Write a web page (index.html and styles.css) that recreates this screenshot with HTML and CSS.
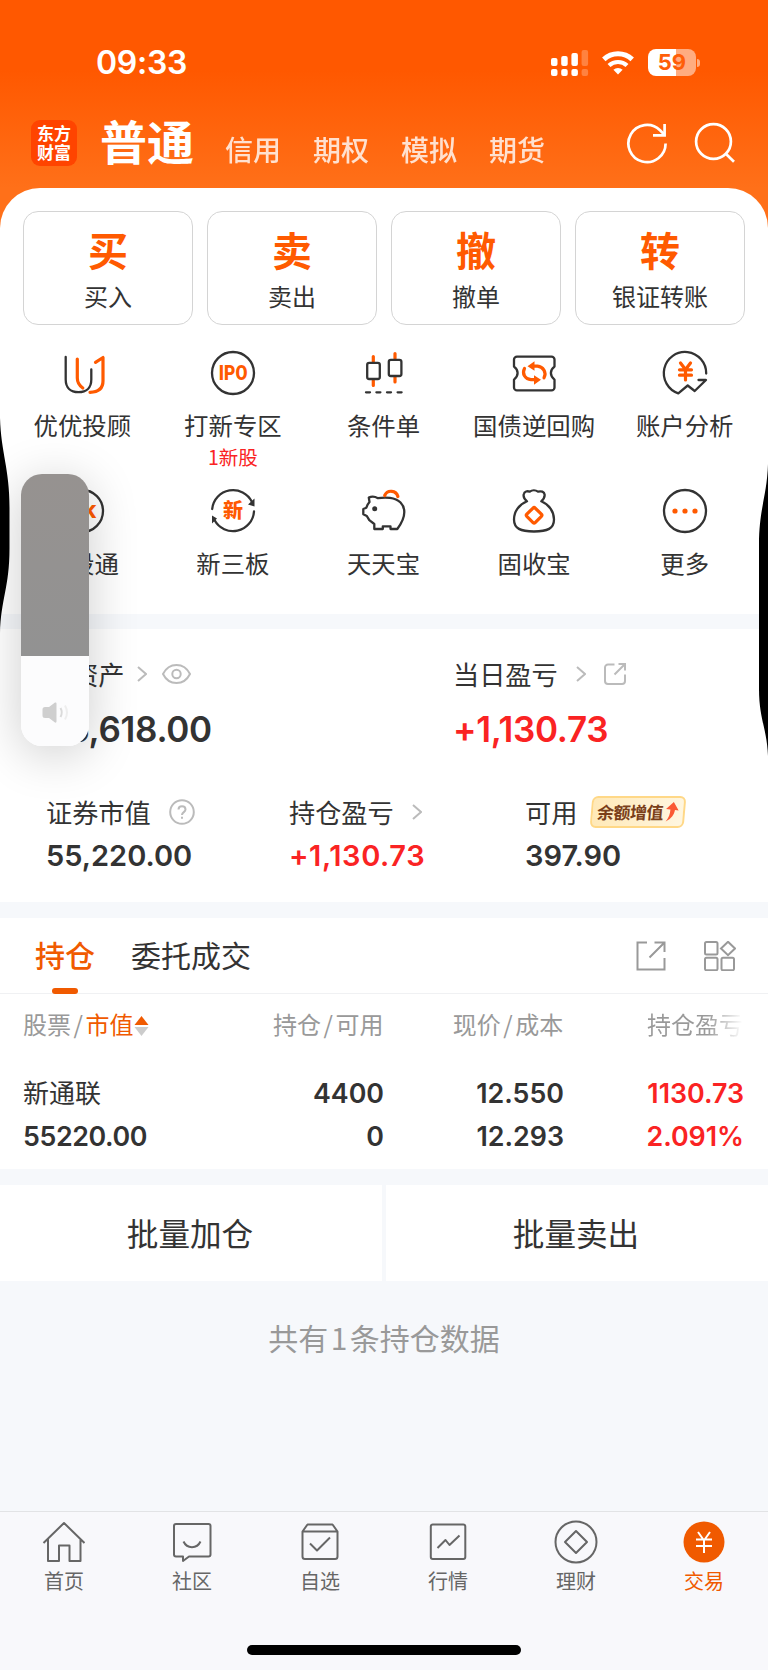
FILE: index.html
```html
<!DOCTYPE html>
<html lang="zh-CN">
<head>
    <meta charset="utf-8">
    <title>交易</title>
    <link rel="stylesheet" href="styles.css">
</head>
<body>
<div class="app">
    <div class="status-bar">
        <div class="clock">09:33</div>
        <div class="status-icons">
            <svg class="signal" width="38" height="26" viewBox="0 0 38 26" fill="#fff">
                <rect x="0" y="8" width="6.5" height="8" rx="2"/>
                <rect x="10.2" y="6" width="6.5" height="10" rx="2"/>
                <rect x="20.4" y="3" width="6.5" height="13" rx="2"/>
                <rect x="30.6" y="0" width="6.5" height="16" rx="2" opacity=".25"/>
                <rect x="0" y="19" width="6.5" height="7" rx="2"/>
                <rect x="10.2" y="19" width="6.5" height="7" rx="2"/>
                <rect x="20.4" y="19" width="6.5" height="7" rx="2"/>
                <rect x="30.6" y="19" width="6.5" height="7" rx="2" opacity=".25"/>
            </svg>
            <svg class="wifi" width="32" height="25" viewBox="0 0 32 25" fill="none" stroke="#fff" stroke-width="5">
                <path d="M1.8 9.4a20.6 20.6 0 0 1 28.4 0"/>
                <path d="M7 15.6a13 13 0 0 1 18 0" stroke-width="4.2"/>
                <path d="M16 24.5l-4.6-4.7a6.6 6.6 0 0 1 9.2 0z" fill="#fff" stroke="none"/>
            </svg>
            <div class="battery"><span>59</span></div>
            <div class="battery-tip"></div>
        </div>
    </div>

    <div class="top-nav">
        <div class="logo"><span>东方</span><span>财富</span></div>
        <div class="nav-active">普通</div>
        <div class="nav-links">
            <span>信用</span>
            <span>期权</span>
            <span>模拟</span>
            <span>期货</span>
        </div>
        <div class="nav-icons">
            <svg width="42" height="42" viewBox="0 0 42 42" fill="none" stroke="#fff" stroke-width="2.7">
                <path d="M39.6 21.500A18.6 18.6 0 1 1 34 8.2l4 4"/>
                <path d="M38.6 2v11.4H27"/>
            </svg>
            <svg width="42" height="42" viewBox="0 0 42 42" fill="none" stroke="#fff" stroke-width="2.7">
                <circle cx="19.5" cy="19.5" r="17.4"/>
                <path d="M31.8 31.8l8.2 8"/>
            </svg>
        </div>
    </div>

    <div class="sheet">
        <div class="cards">
            <div class="card"><b>买</b><span>买入</span></div>
            <div class="card"><b>卖</b><span>卖出</span></div>
            <div class="card"><b>撤</b><span>撤单</span></div>
            <div class="card"><b>转</b><span>银证转账</span></div>
        </div>

        <div class="services">
            <div class="service">
                <svg class="line-icon" viewBox="0 0 44 44">
                    <path class="dark" d="M5.7 6v22.5c0 8.2 4.8 12.7 12.8 12.7s12.8-4.5 12.8-12.7v-10"/>
                    <path class="hot" d="M17.3 8v19c0 5 2 7.5 5.5 10M35.5 11.300L43 6.5V30c0 7.5-5 11-13 11.3"/>
                </svg>
                <span>优优投顾</span>
            </div>
            <div class="service">
                <svg class="line-icon" viewBox="0 0 44 44">
                    <circle class="dark" cx="22" cy="22" r="21"/>
                    <text x="7.8" y="29.2" textLength="28.6" lengthAdjust="spacingAndGlyphs" font-size="20.5">IPO</text>
                </svg>
                <span>打新专区</span>
                <em>1新股</em>
            </div>
            <div class="service">
                <svg class="line-icon" viewBox="0 0 44 44">
                    <path class="hot" d="M12.3 5.5v5M12.3 29.500v5M34 2.500v5M34 26v5"/>
                    <rect class="dark" x="6.2" y="11.8" width="12.600" height="16.2" rx="2"/>
                    <rect class="dark" x="27.800" y="8.8" width="12.600" height="16.2" rx="2"/>
                    <path class="dark" d="M5 41.300h4M15.400 41.300h4M26 41.300h4M36.600 41.300h4"/>
                </svg>
                <span>条件单</span>
            </div>
            <div class="service">
                <svg class="line-icon" viewBox="0 0 44 44">
                    <path class="dark" d="M5 5.6h34.500a3 3 0 0 1 3 3v7c-4.800 3.500-4.800 9.500 0 13v7.800a3 3 0 0 1-3 3H5a3 3 0 0 1-3-3v-7.800c4.800-3.500 4.800-9.500 0-13v-7a3 3 0 0 1 3-3z"/>
                    <path class="hot" d="M12.500 17.500c-3 5.500 1 10.800 6.500 11.200h5M32 26.800c3-5.500-1-11-6.500-11.600h-5"/>
                    <path d="M15.500 15.200l7-5v9.500zM29 28.700l-7 5v-9.500z" fill="#ff5a00"/>
                </svg>
                <span>国债逆回购</span>
            </div>
            <div class="service">
                <svg class="line-icon" viewBox="0 0 44 44">
                    <path class="dark" d="M43.200 22.600A21.200 21.200 0 1 0 15.300 42.300l9.400-7.800 7 5.500L43 29h-7.500"/>
                    <path class="hot" d="M17.500 12l5 6.500 5-6.500M16.500 18.800h12M16.500 24.200h12M22.500 19v10"/>
                </svg>
                <span>账户分析</span>
            </div>
            <div class="service">
                <svg class="line-icon" viewBox="0 0 44 44">
                    <circle class="dark" cx="22" cy="22" r="21"/>
                    <text x="9" y="29" textLength="27" lengthAdjust="spacingAndGlyphs" font-size="19">HK</text>
                </svg>
                <span>港股通</span>
            </div>
            <div class="service">
                <svg class="line-icon" viewBox="0 0 44 44">
                    <path class="dark" d="M1.200 20A21 21 0 0 1 41 13M43 22.500A21 21 0 0 1 3.500 31"/>
                    <path d="M43.500 9.500v8l-6.500-2zM1 34.500V26.500l5 3z" fill="#333"/>
                    <text class="cjk" x="22" y="29" text-anchor="middle" font-size="20">新</text>
                </svg>
                <span>新三板</span>
            </div>
            <div class="service">
                <svg class="line-icon" viewBox="0 0 44 44">
                    <path class="dark" d="M8.500 13L7.800 8.600c3-1.500 6-1.200 9.200.6 4-.8 8-.8 12-.4C38 10 43.300 15.500 43.300 23c0 6-2.500 11-7 17h-6.800v-2.600h-7.700V40h-8.500v-5l-5-3.800L5.800 27l-3.500-1.800V20l3-1.200c.6-2.300 1.800-4.300 3.200-5.800z"/>
                    <circle cx="13.700" cy="19.700" r="2.500" fill="#333"/>
                    <path class="hot" d="M23.700 6.500a7 7 0 0 1 13.200 1"/>
                </svg>
                <span>天天宝</span>
            </div>
            <div class="service">
                <svg class="line-icon" viewBox="0 0 44 44">
                    <path class="dark" d="M15 12.300c-3-2.300-3.800-5-3.200-7.300.6-2.600 3.400-3.300 6-2.300 2.300-1.800 5.800-1.800 8.200 0 3.200-1 6.200 0 6.600 2.800.3 2.300-.8 4.500-3.300 6.800C37 15.500 42 22.500 42 30.500c0 9-6.500 12-20 12s-20-3-20-12c0-8 5-15 13-18.200z"/>
                    <rect class="hot" x="16.200" y="20.400" width="11.800" height="11.800" rx="1.500" transform="rotate(45 22.100 26.300)"/>
                </svg>
                <span>固收宝</span>
            </div>
            <div class="service">
                <svg class="line-icon" viewBox="0 0 44 44">
                    <circle class="dark" cx="22" cy="22" r="21"/>
                    <g fill="#ff5a00"><circle cx="12" cy="22" r="2.600"/><circle cx="22" cy="22" r="2.600"/><circle cx="32" cy="22" r="2.600"/></g>
                </svg>
                <span>更多</span>
            </div>
        </div>
    </div>

    <div class="assets">
        <div class="assets-main">
            <div>
                <div class="label">总资产
                    <svg class="chevron" width="10" height="16" viewBox="0 0 10 16"><path d="M1 1l8 7-8 7"/></svg>
                    <svg class="eye" width="29" height="20" viewBox="0 0 29 20"><path d="M1 10C7-2 22-2 28 10 22 22 7 22 1 10z"/><circle cx="14.500" cy="10" r="4.200"/></svg>
                </div>
                <div class="num big">55,618.00</div>
            </div>
            <div>
                <div class="label">当日盈亏
                    <svg class="chevron wide" width="10" height="16" viewBox="0 0 10 16"><path d="M1 1l8 7-8 7"/></svg>
                    <svg class="share" width="22" height="22" viewBox="0 0 22 22"><path d="M10.500 1.500H4a3 3 0 0 0-3 3V18a3 3 0 0 0 3 3h14a3 3 0 0 0 3-3v-6.500M14.500 1H21v6.500M20.500 1.500L10.500 11.500"/></svg>
                </div>
                <div class="num big red">+1,130.73</div>
            </div>
        </div>
        <div class="assets-sub">
            <div>
                <div class="label">证券市值
                    <svg class="help" width="26" height="26" viewBox="0 0 26 26"><circle cx="13" cy="13" r="11.800"/><path d="M9.500 10.500c0-4.500 7-4.500 7 0 0 2.700-3.500 2.500-3.500 5.500M13 17.800v2"/></svg>
                </div>
                <div class="num">55,220.00</div>
            </div>
            <div>
                <div class="label">持仓盈亏
                    <svg class="chevron wide" width="10" height="16" viewBox="0 0 10 16"><path d="M1 1l8 7-8 7"/></svg>
                </div>
                <div class="num red loose">+1,130.73</div>
            </div>
            <div>
                <div class="label">可用
                    <div class="badge">
                        <span>余额增值</span>
                        <svg width="15" height="20" viewBox="0 0 15 20"><path d="M9 0l5.500 8.500-3.700-.5c-.5 5-2.800 8.500-8.300 11.500C5.500 15.500 6.200 12 6.200 7.500L1.800 7z" fill="#fb5a35"/></svg>
                    </div>
                </div>
                <div class="num">397.90</div>
            </div>
        </div>
    </div>

    <div class="holdings">
        <div class="tabs">
            <div class="tab active">持仓</div>
            <div class="tab">委托成交</div>
            <div class="tab-icons">
                <svg width="30" height="30" viewBox="0 0 30 30"><path d="M11 1.500H1.500v27h27V17M18.500 1.500h10V11M28 2L13.500 16.500"/></svg>
                <svg width="32" height="30" viewBox="0 0 32 30"><rect x="1" y="1" width="12.500" height="12.500" rx="1.500"/><rect x="1" y="16.800" width="12.500" height="12.500" rx="1.500"/><rect x="17.500" y="16.800" width="12.500" height="12.500" rx="1.500"/><path d="M24 .8l7 6.700-7 6.700-7-6.700z"/></svg>
            </div>
        </div>
        <div class="row head">
            <div>股票<i>/</i><span class="sorted">市值</span><svg width="15" height="20" viewBox="0 0 15 20"><path d="M7.500 0l7 9H.5z" fill="#f05a00"/><path d="M7.500 20l7-9H.5z" fill="#ccc"/></svg></div>
            <div>持仓<i>/</i>可用</div>
            <div>现价<i>/</i>成本</div>
            <div class="fade">持仓盈亏</div>
        </div>
        <div class="row stock">
            <div><p class="name">新通联</p><p class="tight">55220.00</p></div>
            <div><p>4400</p><p>0</p></div>
            <div><p>12.550</p><p>12.293</p></div>
            <div class="red"><p>1130.73</p><p>2.091%</p></div>
        </div>
    </div>

    <div class="batch">
        <div>批量加仓</div>
        <div>批量卖出</div>
    </div>
    <div class="total">共有<span>1</span>条持仓数据</div>

    <div class="tabbar">
        <div class="tabbar-items">
            <div class="item">
                <svg viewBox="0 0 44 44"><path d="M1.500 23L22 3l20.500 20M6 19v22h11V25.500h10.500V41h11V19"/></svg>
                <span>首页</span>
            </div>
            <div class="item">
                <svg viewBox="0 0 44 44"><path d="M6 4h32.500a2 2 0 0 1 2 2v28.500a2 2 0 0 1-2 2H19l-6 4.500v-4.500H6a2 2 0 0 1-2-2V6a2 2 0 0 1 2-2zM13.500 21.500c3.500 7.500 13.500 7.500 17 0"/></svg>
                <span>社区</span>
            </div>
            <div class="item">
                <svg viewBox="0 0 44 44"><path d="M4.500 11.500h35v25a2.500 2.500 0 0 1-2.500 2.500H7a2.500 2.500 0 0 1-2.500-2.500v-25l5-7h25l5 7M12 23.500l7 7L32 17.500"/></svg>
                <span>自选</span>
            </div>
            <div class="item">
                <svg viewBox="0 0 44 44"><rect x="4.800" y="4.500" width="34.500" height="34.500" rx="2"/><path d="M11.500 28l8-8 4 5L33.500 15.500"/></svg>
                <span>行情</span>
            </div>
            <div class="item">
                <svg viewBox="0 0 44 44"><circle cx="22" cy="22" r="20.500"/><path d="M22 11l11 11-11 11-11-11z"/></svg>
                <span>理财</span>
            </div>
            <div class="item on">
                <svg viewBox="0 0 44 44"><circle cx="22" cy="22" r="20.500" fill="#f05a00" stroke="none"/><path d="M16 12l6 8.500 6-8.500M14 19.500h16M14 26h16M22 20.500V33" stroke="#fff"/></svg>
                <span>交易</span>
            </div>
        </div>
        <div class="home-bar"></div>
    </div>

    <!-- screen edges pushed in by the side buttons -->
    <svg class="edge-left" width="10" height="220" viewBox="0 0 10 220"><path d="M0 0C1 35 9.500 50 9.500 90v40c0 40-8.500 50-9.500 86z"/></svg>
    <svg class="edge-right" width="9" height="292" viewBox="0 0 9 292"><path d="M9 0C8 32 0 45 0 80v145c0 30 8 40 9 67z"/></svg>

    <div class="volume">
        <div class="volume-rest"></div>
        <div class="volume-level">
            <svg width="27" height="21" viewBox="0 0 27 21"><path d="M3 5h4l6-4.500q1.500-.5 1.500 1v18q0 1.500-1.500 1L7 16H3q-2.500 0-2.500-2.500v-6Q.5 5 3 5z" fill="#cfcfcf"/><path d="M18.500 6q2.500 4.500 0 9" stroke="#dadada"/><path d="M23 3.500q4 7 0 14" stroke="#eee"/></svg>
        </div>
    </div>
</div>
</body>
</html>
```
FILE: styles.css
```css
* {
    box-sizing: border-box;
}
body {
    margin: 0;
    font-family: "Noto Sans CJK SC", sans-serif;
    color: #333;
    background-color: #f6f8fb;
}
p {
    margin: 0;
}
svg {
    display: block;
    flex-shrink: 0;
}
.app {
    position: relative;
    width: 768px;
    height: 1670px;
    display: flex;
    flex-direction: column;
    overflow: hidden;
    background: linear-gradient(#ff5800 0, #ff5800 70px, #ff7019 188px, #ff7019 240px, #f6f8fb 240px);
}

/* status bar */
.status-bar {
    height: 104px;
    padding: 42px 68px 0 96px;
    display: flex;
    justify-content: space-between;
    align-items: flex-start;
}
.clock {
    font-family: Inter, sans-serif;
    font-size: 32px;
    font-weight: 600;
    line-height: 42px;
    letter-spacing: -.3px;
    color: #fff;
}
.status-icons {
    display: flex;
    align-items: center;
    margin-top: 7px;
}
.wifi {
    margin-left: 13px;
}
.battery {
    width: 48px;
    height: 27px;
    margin-left: 14px;
    border-radius: 8px;
    background: linear-gradient(90deg, #fff 58%, #ffac80 58%);
    font-family: Inter, sans-serif;
    font-size: 22px;
    font-weight: 700;
    line-height: 27px;
    text-align: center;
    color: #ff5e08;
}
.battery-tip {
    width: 3px;
    height: 8px;
    margin-left: 1px;
    border-radius: 0 3px 3px 0;
    background-color: #ffac80;
}

/* top nav */
.top-nav {
    height: 84px;
    padding: 0 32px 0 31px;
    display: flex;
    align-items: flex-start;
    color: #fff;
}
.logo {
    width: 46px;
    height: 46px;
    margin-top: 16px;
    padding-top: 3px;
    border-radius: 9px;
    background-color: #ff4400;
    font-size: 17px;
    font-weight: 700;
    line-height: 19px;
    text-align: center;
}
.logo span {
    display: block;
}
.nav-active {
    margin-left: 23px;
    margin-top: 8px;
    font-size: 47px;
    font-weight: 700;
    line-height: 56px;
}
.nav-links {
    display: flex;
    gap: 32px;
    margin-left: 31px;
    margin-top: 25px;
    font-size: 28px;
    font-weight: 500;
    line-height: 40px;
    opacity: .8;
}
.nav-icons {
    display: flex;
    gap: 26px;
    margin-left: auto;
    margin-top: 18px;
}

/* white sheet */
.sheet {
    height: 426px;
    padding-top: 23px;
    border-radius: 40px 40px 0 0;
    background-color: #fff;
}
.cards {
    display: grid;
    grid-template-columns: repeat(4, 1fr);
    gap: 14px;
    padding: 0 23px;
}
.card {
    height: 114px;
    border: 1px solid #d4d4d4;
    border-radius: 15px;
    text-align: center;
}
.card b {
    display: block;
    margin-top: 12px;
    font-size: 40px;
    line-height: 50px;
    color: #ff5a00;
}
.card span {
    display: block;
    margin-top: 6px;
    font-size: 24px;
    line-height: 32px;
}
.services {
    display: grid;
    grid-template-columns: repeat(5, 150.6px);
    grid-template-rows: 138px 125px;
    padding: 26px 7px 0;
}
.service {
    display: flex;
    flex-direction: column;
    align-items: center;
}
.service span {
    margin-top: 13.5px;
    font-size: 24.4px;
    line-height: 32px;
}
.service em {
    margin-top: 1px;
    font-size: 19.5px;
    font-style: normal;
    line-height: 30px;
    color: #fa2323;
}
.line-icon {
    width: 44px;
    height: 44px;
    fill: none;
    overflow: visible;
}
.line-icon .dark {
    stroke: #333;
    stroke-width: 2.3;
    stroke-linecap: round;
    stroke-linejoin: round;
}
.line-icon .hot {
    stroke: #ff5a00;
    stroke-width: 3.2;
    stroke-linecap: round;
    stroke-linejoin: round;
}
.line-icon text {
    fill: #ff5a00;
    font-family: Roboto, sans-serif;
    font-weight: 900;
}
.line-icon .cjk {
    font-family: "Noto Sans CJK SC", sans-serif;
}

/* assets */
.assets {
    height: 273px;
    margin-top: 15px;
    padding: 25px 0 0 46px;
    background-color: #fff;
}
.assets-main {
    display: grid;
    grid-template-columns: 407px 1fr;
}
.assets-sub {
    display: grid;
    grid-template-columns: 243px 236px 1fr;
    margin-top: 43px;
}
.label {
    height: 40px;
    display: flex;
    align-items: center;
    font-size: 26.2px;
    line-height: 40px;
}
.label svg {
    fill: none;
    stroke: #bbb;
    stroke-width: 2;
}
.chevron {
    margin-left: 12px;
}
.chevron.wide {
    margin-left: 18px;
}
.eye {
    margin-left: 15px;
}
.share {
    margin-left: 18px;
}
.help {
    margin-left: 18px;
}
.num {
    margin-top: 4px;
    font-family: Inter, sans-serif;
    font-size: 29px;
    font-weight: 600;
    line-height: 40px;
}
.num.big {
    margin-top: 15px;
    font-size: 35px;
    letter-spacing: -.3px;
}
.num.loose {
    letter-spacing: .6px;
}
.red {
    color: #fa2323;
}
.badge {
    width: 94px;
    height: 32px;
    margin-left: 14px;
    display: flex;
    align-items: center;
    justify-content: center;
    border: 2px solid #ffd887;
    border-radius: 6px;
    background: linear-gradient(90deg, #ffe9b8, #fff6e0);
    transform: skewX(-5deg);
    font-size: 17px;
    font-weight: 700;
    letter-spacing: -.5px;
    color: #7a3f1a;
}
.badge svg {
    margin-left: 1px;
    stroke: none;
}

/* holdings */
.holdings {
    height: 251px;
    margin-top: 16px;
    background-color: #fff;
}
.tabs {
    height: 76px;
    padding: 0 32px 0 35px;
    display: flex;
    align-items: center;
    border-bottom: 1px solid #f0f1f3;
}
.tab {
    height: 76px;
    margin-right: 36px;
    font-size: 30px;
    line-height: 73px;
}
.tab.active {
    font-weight: 500;
    color: #f05a00;
}
.tab.active::after {
    content: "";
    display: block;
    width: 26px;
    height: 6px;
    margin: -3px auto 0;
    border-radius: 3px;
    background-color: #f05a00;
}
.tab-icons {
    display: flex;
    gap: 38px;
    margin-left: auto;
}
.tab-icons svg {
    fill: none;
    stroke: #999;
    stroke-width: 2;
}
.row {
    display: grid;
    grid-template-columns: repeat(4, 1fr);
    padding: 0 24px;
    text-align: right;
}
.row > div:first-child {
    margin-left: -1px;
    text-align: left;
}
.head {
    height: 62px;
    padding-right: 25px;
    font-size: 24px;
    line-height: 60px;
    color: #999;
}
.head i {
    margin: 0 2.5px;
    font-style: normal;
}
.head svg {
    display: inline-block;
    margin-left: 1px;
    vertical-align: -2px;
}
.head .sorted {
    color: #f05a00;
}
.fade {
    background: linear-gradient(90deg, #999 80%, #fff);
    -webkit-background-clip: text;
    background-clip: text;
    color: transparent;
}
.stock {
    padding-top: 17px;
    font-family: Inter, sans-serif;
    font-size: 26.8px;
    font-weight: 600;
    line-height: 40px;
}
.stock p + p {
    margin-top: 3px;
}
.stock .name {
    margin-top: -1px;
    margin-bottom: 4px;
    font-family: "Noto Sans CJK SC", sans-serif;
    font-size: 26px;
    font-weight: 400;
}
.stock .tight {
    letter-spacing: -.4px;
}

.batch {
    height: 96px;
    margin-top: 16px;
    display: flex;
    gap: 4px;
}
.batch div {
    flex: 1;
    padding-right: 2px;
    background-color: #fff;
    font-size: 31.6px;
    line-height: 94px;
    text-align: center;
}
.total {
    margin-top: 36px;
    font-size: 30px;
    line-height: 40px;
    text-align: center;
    color: #999;
}
.total span {
    margin: 0 2.5px;
}

/* bottom tab bar */
.tabbar {
    height: 159px;
    margin-top: auto;
    border-top: 1px solid #e2e3e5;
    background-color: #f8f8fb;
}
.tabbar-items {
    display: grid;
    grid-template-columns: repeat(6, 1fr);
    padding-top: 8px;
}
.item {
    display: flex;
    flex-direction: column;
    align-items: center;
    font-size: 20px;
    line-height: 24px;
    color: #666;
}
.item svg {
    width: 44px;
    height: 44px;
    fill: none;
    stroke: #666;
    stroke-width: 2;
    stroke-linejoin: round;
}
.item span {
    margin-top: 5px;
}
.item.on {
    color: #f05a00;
}
.home-bar {
    width: 274px;
    height: 10px;
    margin: 52px auto 0;
    border-radius: 5px;
    background-color: #000;
}

/* overlays */
.edge-left {
    position: absolute;
    left: 0;
    top: 418px;
}
.edge-right {
    position: absolute;
    right: 0;
    top: 464px;
}
.volume {
    position: absolute;
    left: 21px;
    top: 474px;
    width: 68px;
    height: 272px;
    border-radius: 21px;
    overflow: hidden;
    box-shadow: 0 8px 50px rgba(0, 0, 0, .2);
}
.volume-rest {
    height: 182px;
    background: linear-gradient(#969290, #929292);
}
.volume-level {
    height: 90px;
    padding: 46px 0 0 21px;
    background-color: #fcfcfd;
}
.volume-level svg {
    fill: none;
    stroke-width: 2;
}
```
